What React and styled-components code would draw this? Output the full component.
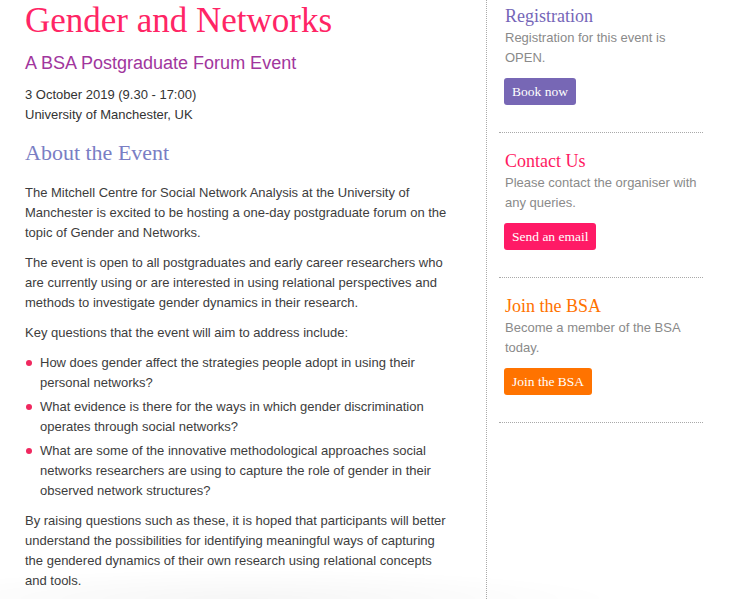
import React from 'react';
import styled, { createGlobalStyle } from 'styled-components';

/* Data ---------------------------*/
const questions = [
    'How does gender affect the strategies people adopt in using their personal networks?',
    'What evidence is there for the ways in which gender discrimination operates through social networks?',
    'What are some of the innovative methodological approaches social networks researchers are using to capture the role of gender in their observed network structures?',
];

const panels = [
    {
        title: 'Registration',
        text: 'Registration for this event is OPEN.',
        button: 'Book now',
        heading: '#7566b8',
        fill: '#7767b5',
    },
    {
        title: 'Contact Us',
        text: 'Please contact the organiser with any queries.',
        button: 'Send an email',
        heading: '#ff1a62',
        fill: '#ff1a66',
    },
    {
        title: 'Join the BSA',
        text: 'Become a member of the BSA today.',
        button: 'Join the BSA',
        heading: '#ff7200',
        fill: '#ff7300',
    },
];

/* Components ---------------------------*/
const SidePanel = ({ panel }) => {
    return (
        <PanelStyled $heading={panel.heading} $fill={panel.fill}>
            <h3>{panel.title}</h3>
            <p>{panel.text}</p>
            <button type="button">{panel.button}</button>
        </PanelStyled>
    );
};

const App = () => {

    return (
        <>
            <GlobalStyle />
            <PageStyled className='Event'>
                <MainStyled>
                    <h1>Gender and Networks</h1>
                    <h2>A BSA Postgraduate Forum Event</h2>
                    <div className="meta">
                        3 October 2019 (9.30 - 17:00)<br />
                        University of Manchester, UK
                    </div>

                    <h3>About the Event</h3>
                    <p>
                        The Mitchell Centre for Social Network Analysis at the University of Manchester
                        is excited to be hosting a one-day postgraduate forum on the topic of Gender and Networks.
                    </p>
                    <p>
                        The event is open to all postgraduates and early career researchers who are
                        currently using or are interested in using relational perspectives and methods
                        to investigate gender dynamics in their research.
                    </p>
                    <p>Key questions that the event will aim to address include:</p>
                    <ul>
                        {questions.map((q) => <li key={q}>{q}</li>)}
                    </ul>
                    <p>
                        By raising questions such as these, it is hoped that participants will better
                        understand the possibilities for identifying meaningful ways of capturing the
                        gendered dynamics of their own research using relational concepts and tools.
                    </p>
                </MainStyled>

                <SidebarStyled>
                    {panels.map((panel) => <SidePanel key={panel.title} panel={panel} />)}
                </SidebarStyled>
            </PageStyled>
            <BottomFade />
        </>
    );
}

export default App;

const GlobalStyle = createGlobalStyle`
    html, body {
        margin: 0;
        padding: 0;
        background: #fff;
    }
    body {
        font-family: "Liberation Sans", Arial, Helvetica, sans-serif;
        overflow: hidden;
    }
`;

const PageStyled = styled.div`
    display: flex;
    align-items: stretch;
    min-height: 599px;
`;

const MainStyled = styled.div`
    width: 426px;
    padding-left: 25px;
    margin-right: 35px;
    color: #3d3d3d;
    font-size: 13px;
    line-height: 20px;

    h1 {
        margin: 0;
        padding-top: 2px;
        font-family: "Liberation Serif", "Times New Roman", serif;
        font-weight: normal;
        font-size: 35px;
        line-height: 38px;
        color: #ff2565;
    }

    h2 {
        margin: 11px 0 10px;
        font-weight: normal;
        font-size: 18px;
        line-height: 24px;
        color: #a1369d;
    }

    .meta {
        color: #333;
    }

    h3 {
        margin: 15px 0 17px;
        font-family: "Liberation Serif", "Times New Roman", serif;
        font-weight: normal;
        font-size: 22px;
        line-height: 26px;
        color: #7a7ec4;
    }

    p {
        margin: 0 0 10px;
    }

    ul {
        list-style: none;
        margin: 0 0 10px;
        padding: 0;
    }

    li {
        position: relative;
        padding-left: 15px;
        margin-bottom: 4px;

        &::before {
            content: '';
            position: absolute;
            left: 1px;
            top: 7px;
            width: 6px;
            height: 6px;
            border-radius: 50%;
            background: #f0285f;
        }
    }
`;

const SidebarStyled = styled.aside`
    border-left: 1px dotted #a9a9a9;
    padding: 5px 0 0 12px;
    width: 204px;
`;

const PanelStyled = styled.div`
    padding: 0 6px 27px;
    border-bottom: 1px dotted #a9a9a9;

    & + & {
        padding-top: 17px;
    }

    h3 {
        margin: 0 0 1px;
        font-family: "Liberation Serif", "Times New Roman", serif;
        font-weight: normal;
        font-size: 18px;
        line-height: 22px;
        color: ${(p) => p.$heading};
    }

    p {
        margin: 0 0 10px;
        font-size: 13px;
        line-height: 20px;
        color: #8a8a8a;
    }

    button {
        display: block;
        border: none;
        border-radius: 3px;
        padding: 5px 8px;
        margin: 0 0 0 -1px;
        background: ${(p) => p.$fill};
        color: #fff;
        font-family: "Liberation Serif", "Times New Roman", serif;
        font-size: 13.5px;
        line-height: 17px;
        cursor: pointer;
    }
`;

const BottomFade = styled.div`
    position: fixed;
    left: 0;
    bottom: 0;
    width: 620px;
    height: 30px;
    pointer-events: none;
    background: radial-gradient(ellipse 60% 100% at 40% 100%, rgba(0, 0, 0, 0.035), rgba(0, 0, 0, 0));
`;
